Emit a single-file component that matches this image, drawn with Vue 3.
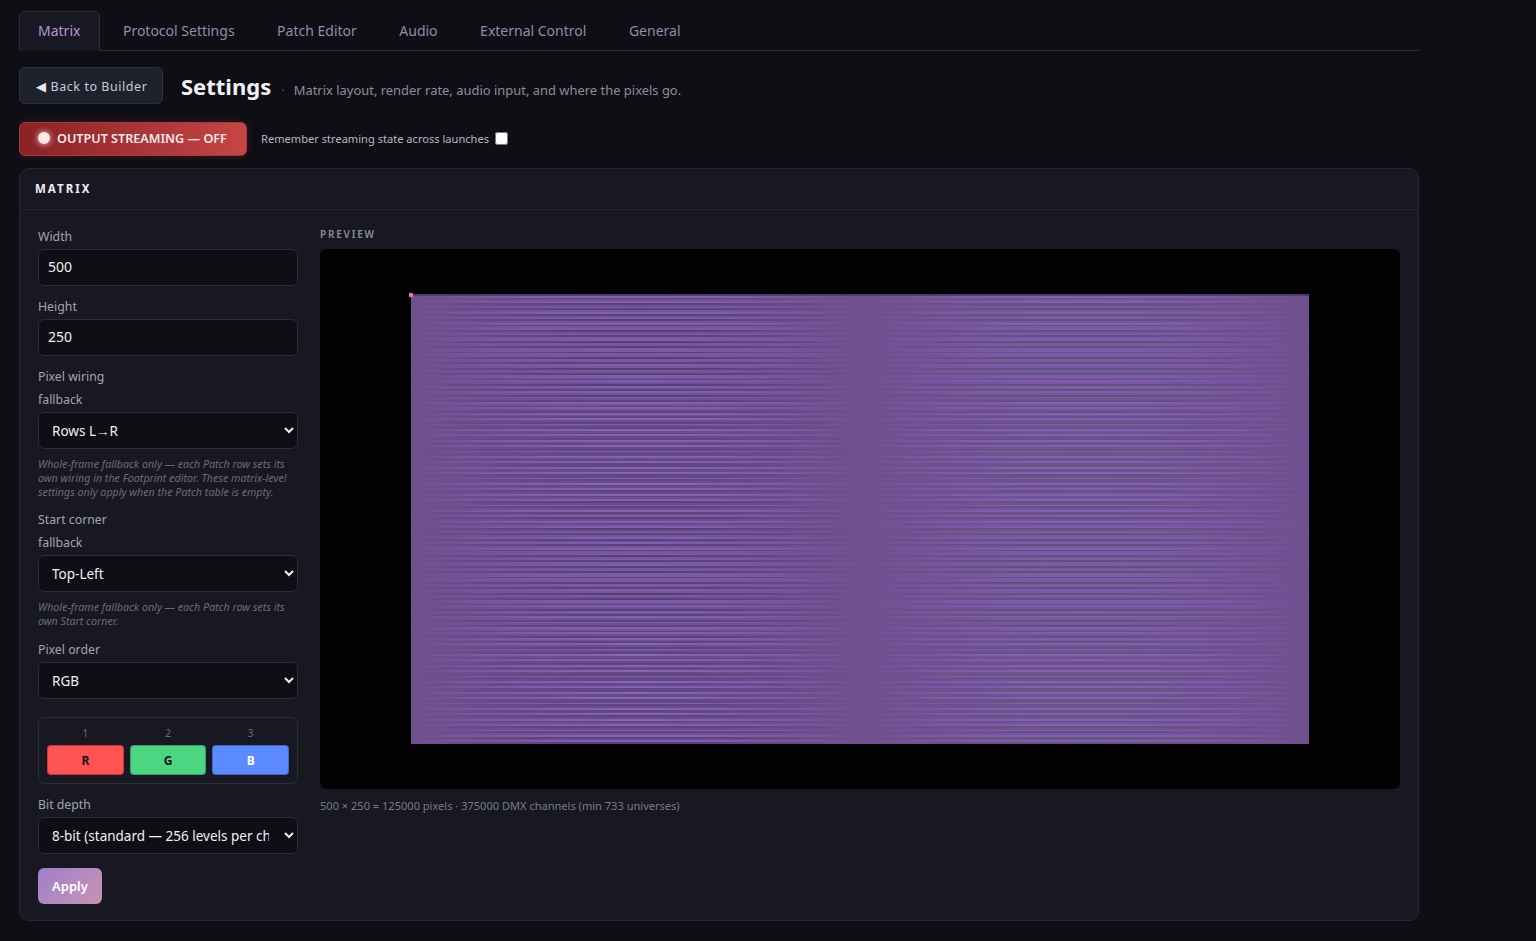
<template>
  <div class="page">
    <nav class="tabs">
      <button v-for="(t, i) in tabs" :key="t" class="tab" :class="{ active: i === 0 }">{{ t }}</button>
    </nav>

    <div class="head">
      <button class="back"><span class="arrow">◀</span>Back to Builder</button>
      <h1>Settings</h1>
      <span class="sub"><span class="dot">·</span>Matrix layout, render rate, audio input, and where the pixels go.</span>
    </div>

    <div class="stream_row">
      <button class="stream"><span class="led"></span>OUTPUT STREAMING — OFF</button>
      <label class="remember">Remember streaming state across launches <input type="checkbox" /></label>
    </div>

    <section class="card">
      <div class="card_title">MATRIX</div>
      <div class="card_body">
        <div class="left">
          <label class="lbl">Width</label>
          <input class="field" value="500" />
          <label class="lbl gap">Height</label>
          <input class="field" value="250" />
          <label class="lbl gap">Pixel wiring<br />fallback</label>
          <select class="field sel"><option>Rows L→R</option></select>
          <p class="hint">Whole-frame fallback only — each Patch row sets its own wiring in the Footprint editor. These matrix-level settings only apply when the Patch table is empty.</p>
          <label class="lbl gap2">Start corner<br />fallback</label>
          <select class="field sel"><option>Top-Left</option></select>
          <p class="hint">Whole-frame fallback only — each Patch row sets its own Start corner.</p>
          <label class="lbl gap3">Pixel order</label>
          <select class="field sel"><option>RGB</option></select>
          <div class="order">
            <div v-for="c in chans" :key="c.n" class="chan">
              <span class="num">{{ c.n }}</span>
              <span class="chip" :class="c.cls">{{ c.l }}</span>
            </div>
          </div>
          <label class="lbl gap2">Bit depth</label>
          <select class="field sel"><option>8-bit (standard — 256 levels per channel)</option></select>
          <button class="apply">Apply</button>
        </div>
        <div class="right">
          <div class="prev_lbl">PREVIEW</div>
          <div class="preview">
            <div class="canvas_wrap">
              <canvas ref="cv" width="500" height="250"></canvas>
              <span class="origin"></span>
            </div>
          </div>
          <div class="stats">500 × 250 = 125000 pixels · 375000 DMX channels (min 733 universes)</div>
        </div>
      </div>
    </section>
  </div>
</template>

<script setup>
import { onMounted, ref } from "vue";

const tabs = ["Matrix", "Protocol Settings", "Patch Editor", "Audio", "External Control", "General"];
const chans = [
  { n: 1, l: "R", cls: "r" },
  { n: 2, l: "G", cls: "g" },
  { n: 3, l: "B", cls: "b" },
];
const cv = ref(null);

onMounted(() => {
  const ctx = cv.value.getContext("2d");
  const img = ctx.createImageData(500, 250);
  const base = [111, 80, 144];
  for (let r = 0; r < 250; r++) {
    // bands repeat every 125 rows, second frequency keeps the lines uneven
    const raw =
      0.95 * Math.sin((2 * Math.PI * r * 42) / 125) +
      0.1 * Math.sin((2 * Math.PI * r * 17) / 125);
    const s = Math.max(-1, Math.min(1, raw));
    for (let c = 0; c < 500; c++) {
      const amp = Math.abs(Math.sin((Math.PI * c) / 250));
      const rightHalf = c >= 250;
      const hi = rightHalf ? [134, 94, 186] : [136, 98, 188];
      const lo = rightHalf ? [92, 84, 112] : [84, 66, 116];
      const to = s > 0 ? hi : lo;
      const k = Math.abs(s) * amp;
      const lift = rightHalf ? amp * 0.3 : 0;
      const i = (r * 500 + c) * 4;
      for (let ch = 0; ch < 3; ch++) {
        const b = base[ch] + (hi[ch] - base[ch]) * lift;
        img.data[i + ch] = r === 0 ? [78, 62, 100][ch] : b + (to[ch] - b) * k;
      }
      img.data[i + 3] = 255;
    }
  }
  ctx.putImageData(img, 0, 0);
});
</script>

<style>
html, body { background: #0e0e14; }
</style>

<style scoped>
.page {
  width: 1400px;
  height: 941px;
  margin-left: 19px;
  padding-top: 11px;
  box-sizing: border-box;
  font-family: "Noto Sans", sans-serif;
  color: #e6e6ee;
  overflow: hidden;
}
.tabs {
  display: flex;
  border-bottom: 1px solid #2a2d3a;
  height: 39px;
}
.tab {
  font: inherit;
  font-size: 14px;
  background: none;
  border: 1px solid transparent;
  border-bottom: none;
  padding: 0 18.5px 2px 22px;
  color: #8a90a8;
  border-radius: 6px 6px 0 0;
}
.tab.active {
  color: #b794d8;
  background: #171822;
  border-color: #2a2d3a;
  padding: 0 18.5px 2px 18px;
  margin-bottom: -1px;
}
.head {
  display: flex;
  align-items: center;
  margin-top: 16px;
  height: 37px;
}
.back {
  display: flex;
  align-items: center;
  font: inherit;
  font-size: 12.5px;
  letter-spacing: 0.55px;
  width: 144px;
  height: 37px;
  padding: 1px 0 0 16px;
  background: #1e222c;
  color: #c8ccd8;
  border: 1px solid #2d3140;
  border-radius: 6px;
}
.arrow { font-size: 13px; margin-right: 4px; color: #e8e8ee; }
h1 {
  font-size: 22px;
  font-weight: 700;
  margin: 0 0 0 18px;
  color: #f2f2f6;
}
.sub {
  font-size: 12.95px;
  color: #8a8e9c;
  margin: 8px 0 0 10px;
}
.dot { margin-right: 9px; color: #555; }
.stream_row {
  display: flex;
  align-items: center;
  margin-top: 18px;
  gap: 14px;
}
.stream {
  display: flex;
  align-items: center;
  font: inherit;
  font-size: 12.6px;
  font-weight: 600;
  width: 228px;
  height: 34px;
  padding: 0 0 2px 18px;
  color: #f4eaea;
  border: 1px solid #a33c3c;
  border-radius: 6px;
  background: linear-gradient(90deg, #8a2226, #c64545);
  box-shadow: 0 0 8px rgba(200, 60, 60, 0.25);
}
.led {
  width: 12px;
  height: 12px;
  border-radius: 50%;
  background: #ffe6e6;
  box-shadow: 0 0 6px #ffd0d0;
  margin-right: 7px;
}
.remember {
  display: flex;
  align-items: center;
  gap: 6px;
  font-size: 11.1px;
  color: #b4b8c4;
  margin-bottom: 2px;
}
.remember input { margin: 0; width: 13px; height: 13px; }
.card {
  margin-top: 12px;
  background: #171822;
  border: 1px solid #262833;
  border-radius: 10px;
  height: 753px;
  box-sizing: border-box;
}
.card_title {
  height: 41px;
  line-height: 40px;
  box-sizing: border-box;
  padding-left: 15px;
  font-size: 11.5px;
  font-weight: 700;
  letter-spacing: 2px;
  color: #eeeef4;
  border-bottom: 1px solid #22242e;
}
.card_body {
  display: flex;
  padding: 15px 18px 0;
  gap: 22px;
}
.left { width: 260px; display: flex; flex-direction: column; }
.lbl { font-size: 12.3px; line-height: 23px; color: #a3a5ad; }
.gap { margin-top: 9px; }
.gap2 { margin-top: 9px; }
.gap3 { margin-top: 10px; }
.field {
  font: inherit;
  font-size: 14px;
  height: 37px;
  box-sizing: border-box;
  background: #0e0e14;
  color: #f0f0f4;
  border: 1px solid #2a2c38;
  border-radius: 6px;
  padding: 0 9px 2px;
  width: 260px;
  margin-top: 1px;
}
.sel { font-size: 13.5px; padding: 0 12px 0 9px; }
.hint {
  font-size: 10.7px;
  line-height: 14px;
  font-style: italic;
  color: #6a6c78;
  margin: 8px 0 0;
}
.order {
  display: flex;
  gap: 6px;
  margin-top: 18px;
  padding: 9px 8px 8px;
  border: 1px solid #2a2c38;
  border-radius: 6px;
  height: 67px;
  box-sizing: border-box;
}
.chan { flex: 1; display: flex; flex-direction: column; align-items: center; }
.num { font-size: 10px; line-height: 13px; color: #6a6c78; }
.chip {
  margin-top: 5px;
  width: 100%;
  height: 30px;
  line-height: 29px;
  text-align: center;
  box-sizing: border-box;
  font-size: 12px;
  font-weight: 700;
  border-radius: 4px;
  color: #14141a;
  border: 1px solid rgba(0, 0, 0, 0.25);
}
.r { background: #ff5252; }
.g { background: #4dd682; }
.b { background: #5c8aff; color: #fff; }
.apply {
  font: inherit;
  font-size: 13px;
  font-weight: 600;
  width: 64px;
  height: 36px;
  margin-top: 14px;
  border: none;
  border-radius: 6px;
  color: #fff;
  background: linear-gradient(135deg, #a080c8, #c893b4);
}
.right { flex: 1; min-width: 0; }
.prev_lbl {
  font-size: 10px;
  font-weight: 600;
  letter-spacing: 1.8px;
  line-height: 14px;
  color: #8a8e9c;
  margin: 2px 0 8px;
}
.preview {
  height: 540px;
  background: #020204;
  border-radius: 6px;
  display: flex;
  align-items: center;
  justify-content: center;
}
.canvas_wrap { position: relative; width: 898px; height: 450px; }
canvas { display: block; width: 898px; height: 450px; image-rendering: pixelated; }
.origin {
  position: absolute;
  left: -2px;
  top: -1px;
  width: 4px;
  height: 4px;
  border-radius: 1px;
  background: #f078b4;
}
.stats { font-size: 11.05px; color: #777b88; margin-top: 9px; }
</style>
